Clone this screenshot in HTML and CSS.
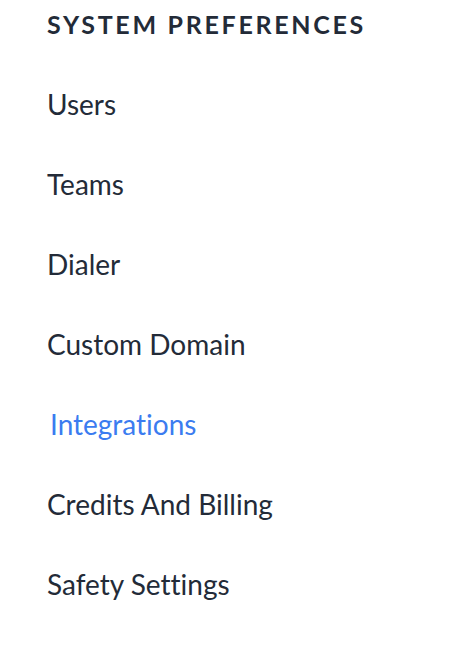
FILE: index.html
```html
<!DOCTYPE html>
<html lang="en">
<head>
  <meta charset="UTF-8">
  <title>System Preferences</title>
  <link rel="stylesheet" href="styles.css">
</head>
<body>
  <nav class="settings-nav">
    <h2>System Preferences</h2>
    <ul>
      <li><a href="#">Users</a></li>
      <li><a href="#">Teams</a></li>
      <li><a href="#">Dialer</a></li>
      <li><a href="#">Custom Domain</a></li>
      <li class="active"><a href="#">Integrations</a></li>
      <li><a href="#">Credits And Billing</a></li>
      <li><a href="#">Safety Settings</a></li>
    </ul>
  </nav>
</body>
</html>
```

FILE: styles.css
```css
body {
  margin: 0;
  padding: 0;
  background: #fff;
  font-family: "Lato", "Open Sans", sans-serif;
  font-variant-ligatures: none;
  color: #232b38;
}
.settings-nav {
  padding: 8px 0 0 47px;
}
.settings-nav h2 {
  margin: 0;
  font-size: 25px;
  font-weight: 700;
  letter-spacing: 2.7px;
  text-transform: uppercase;
  line-height: 32px;
}
.settings-nav ul {
  list-style: none;
  margin: 0;
  padding: 0;
  margin-top: 48px;
}
.settings-nav li {
  height: 80px;
}
.settings-nav a {
  display: block;
  font-size: 28px;
  line-height: 32px;
  color: #232b38;
  text-decoration: none;
}
.settings-nav li.active a {
  color: #3b7cf0;
  padding-left: 3px;
}
```
